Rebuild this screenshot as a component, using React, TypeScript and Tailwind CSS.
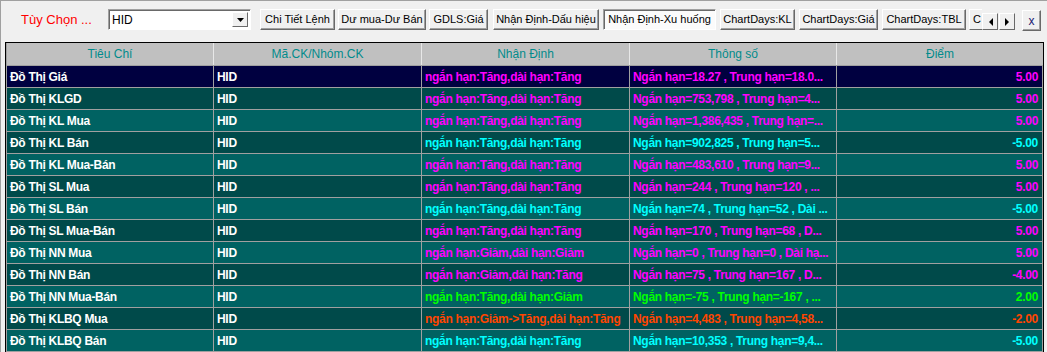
import React from 'react';

type Row = {
  name: string;
  trend: string;
  params: string;
  score: string;
  color: string;
};

const rows: Row[] = [
  { name: 'Đồ Thị Giá', trend: 'ngắn hạn:Tăng,dài hạn:Tăng', params: 'Ngắn hạn=18.27 , Trung hạn=18.0...', score: '5.00', color: 'text-[#ff00ff]' },
  { name: 'Đồ Thị KLGD', trend: 'ngắn hạn:Tăng,dài hạn:Tăng', params: 'Ngắn hạn=753,798 , Trung hạn=4...', score: '5.00', color: 'text-[#ff00ff]' },
  { name: 'Đồ Thị KL Mua', trend: 'ngắn hạn:Tăng,dài hạn:Tăng', params: 'Ngắn hạn=1,386,435 , Trung hạn=...', score: '5.00', color: 'text-[#ff00ff]' },
  { name: 'Đồ Thị KL Bán', trend: 'ngắn hạn:Tăng,dài hạn:Tăng', params: 'Ngắn hạn=902,825 , Trung hạn=5...', score: '-5.00', color: 'text-[#00ffff]' },
  { name: 'Đồ Thị KL Mua-Bán', trend: 'ngắn hạn:Tăng,dài hạn:Tăng', params: 'Ngắn hạn=483,610 , Trung hạn=9...', score: '5.00', color: 'text-[#ff00ff]' },
  { name: 'Đồ Thị SL Mua', trend: 'ngắn hạn:Tăng,dài hạn:Tăng', params: 'Ngắn hạn=244 , Trung hạn=120 , ...', score: '5.00', color: 'text-[#ff00ff]' },
  { name: 'Đồ Thị SL Bán', trend: 'ngắn hạn:Tăng,dài hạn:Tăng', params: 'Ngắn hạn=74 , Trung hạn=52 , Dài ...', score: '-5.00', color: 'text-[#00ffff]' },
  { name: 'Đồ Thị SL Mua-Bán', trend: 'ngắn hạn:Tăng,dài hạn:Tăng', params: 'Ngắn hạn=170 , Trung hạn=68 , D...', score: '5.00', color: 'text-[#ff00ff]' },
  { name: 'Đồ Thị NN Mua', trend: 'ngắn hạn:Giảm,dài hạn:Giảm', params: 'Ngắn hạn=0 , Trung hạn=0 , Dài hạ...', score: '5.00', color: 'text-[#ff00ff]' },
  { name: 'Đồ Thị NN Bán', trend: 'ngắn hạn:Giảm,dài hạn:Tăng', params: 'Ngắn hạn=75 , Trung hạn=167 , D...', score: '-4.00', color: 'text-[#ff00ff]' },
  { name: 'Đồ Thị NN Mua-Bán', trend: 'ngắn hạn:Tăng,dài hạn:Giảm', params: 'Ngắn hạn=-75 , Trung hạn=-167 , ...', score: '2.00', color: 'text-[#00ff00]' },
  { name: 'Đồ Thị KLBQ Mua', trend: 'ngắn hạn:Giảm->Tăng,dài hạn:Tăng', params: 'Ngắn hạn=4,483 , Trung hạn=4,58...', score: '-2.00', color: 'text-[#ff4500]' },
  { name: 'Đồ Thị KLBQ Bán', trend: 'ngắn hạn:Tăng,dài hạn:Tăng', params: 'Ngắn hạn=10,353 , Trung hạn=9,4...', score: '-5.00', color: 'text-[#00ffff]' },
];

const raised =
  'h-[21px] shrink-0 flex items-center justify-center whitespace-nowrap overflow-hidden bg-[#f0f0f0] border border-t-white border-l-white border-r-[#696969] border-b-[#696969] shadow-[inset_-1px_-1px_0_#a0a0a0]';
const sunken =
  'h-[21px] shrink-0 flex items-center justify-center whitespace-nowrap overflow-hidden bg-[#fbfbfb] border border-t-[#a0a0a0] border-l-[#a0a0a0] border-r-white border-b-white shadow-[inset_1px_1px_0_#696969]';

function Btn({ label, w, ml, active }: { label: string; w: string; ml: string; active?: boolean }) {
  return <div className={`${active ? sunken : raised} ${w} ${ml}`}>{label}</div>;
}

function Arrow({ dir }: { dir: 'l' | 'r' }) {
  return (
    <svg width="5" height="8" viewBox="0 0 5 8">
      {dir === 'l' ? <polygon points="5,0 5,8 1,4" fill="#000" /> : <polygon points="0,0 0,8 4,4" fill="#000" />}
    </svg>
  );
}

const cols = ['w-[207px]', 'w-[208px]', 'w-[208px]', 'w-[207px]', 'w-[206px]'];

export default function App() {
  return (
    <div className="w-[1047px] h-[352px] overflow-hidden bg-[#f0f0f0] border-t border-l border-[#a0a0a0] font-['Liberation_Sans',Arial,sans-serif]">
      {/* thanh công cụ */}
      <div className="h-[41px] flex items-start pt-[8px] text-[11px] text-black">
        <div className="ml-[20px] w-[87px] h-[21px] flex items-center text-[13px] text-[#ff0000]">Tùy Chọn ...</div>
        <div className="w-[143px] h-[21px] shrink-0 flex items-center bg-white border border-t-[#a0a0a0] border-l-[#a0a0a0] border-r-white border-b-white shadow-[inset_1px_1px_0_#696969]">
          <span className="pl-[3px] flex-1 text-[12px]">HID</span>
          <div className="w-[16px] h-[15px] mr-[2px] flex items-center justify-center bg-[#f0f0f0] border border-t-white border-l-white border-r-[#696969] border-b-[#696969]">
            <svg width="7" height="4" viewBox="0 0 7 4">
              <polygon points="0,0 7,0 3.5,4" fill="#000" />
            </svg>
          </div>
        </div>
        <Btn label="Chi Tiết Lệnh" w="w-[75px]" ml="ml-[9px]" />
        <Btn label="Dư mua-Dư Bán" w="w-[88px]" ml="ml-[3px]" />
        <Btn label="GDLS:Giá" w="w-[59px]" ml="ml-[3px]" />
        <Btn label="Nhận Định-Dấu hiệu" w="w-[106px]" ml="ml-[5px]" />
        <Btn label="Nhận Định-Xu huống" w="w-[113px]" ml="ml-[4px]" active />
        <Btn label="ChartDays:KL" w="w-[75px]" ml="ml-[4px]" />
        <Btn label="ChartDays:Giá" w="w-[79px]" ml="ml-[4px]" />
        <Btn label="ChartDays:TBL" w="w-[84px]" ml="ml-[4px]" />
        <div className={`${raised} w-[13px] ml-[3px] justify-start pl-[3px] border-r-0 shadow-none`}>C</div>
        <div className="mt-[4px] w-[16px] h-[17px] flex items-center justify-center bg-[#f0f0f0] border border-t-white border-l-white border-r-[#696969] border-b-[#696969]">
          <Arrow dir="l" />
        </div>
        <div className="mt-[4px] ml-[1px] w-[16px] h-[17px] flex items-center justify-center bg-[#f0f0f0] border border-t-white border-l-white border-r-[#696969] border-b-[#696969]">
          <Arrow dir="r" />
        </div>
        <div className={`${raised} w-[19px] h-[20px] ml-[7px] mt-[1px] text-[12px] text-[#1a1a70]`}>x</div>
      </div>

      {/* lưới */}
      <div className="ml-[4px] w-[1039px] border-l border-t border-r border-black">
        <div className="border-l border-[#a0a0a0]">
          <div className="flex h-[23px] bg-[#c0c0c0] border-b border-[#a0a0a0] text-[12px] text-[#008b8b]">
            {['Tiêu Chí', 'Mã.CK/Nhóm.CK', 'Nhận Định', 'Thông số', 'Điểm'].map((h, i) => (
              <div
                key={h}
                className={`${cols[i]} shrink-0 flex items-center justify-center ${i < 4 ? 'border-r border-[#e8e8e8]' : ''}`}
              >
                {h}
              </div>
            ))}
          </div>
          {rows.map((r, idx) => {
            const bg = idx === 0 ? 'bg-[#000040]' : idx % 2 === 1 ? 'bg-[#004a4a]' : 'bg-[#006262]';
            return (
              <div key={r.name} className={`flex h-[22px] text-[12px] font-bold tracking-[-0.3px] ${bg}`}>
                <div className={`${cols[0]} shrink-0 flex items-center pl-[3px] text-white border-r border-b border-[#a0a0a0] whitespace-nowrap overflow-hidden`}>
                  {r.name}
                </div>
                <div className={`${cols[1]} shrink-0 flex items-center pl-[3px] text-white border-r border-b border-[#a0a0a0]`}>
                  HID
                </div>
                <div className={`${cols[2]} shrink-0 flex items-center pl-[3px] ${r.color} border-r border-b border-[#a0a0a0] whitespace-nowrap overflow-hidden`}>
                  {r.trend}
                </div>
                <div className={`${cols[3]} shrink-0 flex items-center pl-[3px] ${r.color} border-r border-b border-[#a0a0a0] whitespace-nowrap overflow-hidden`}>
                  {r.params}
                </div>
                <div className={`${cols[4]} shrink-0 flex items-center justify-end pr-[4px] ${r.color} border-r border-b border-[#a0a0a0]`}>
                  {r.score}
                </div>
              </div>
            );
          })}
        </div>
      </div>
    </div>
  );
}
